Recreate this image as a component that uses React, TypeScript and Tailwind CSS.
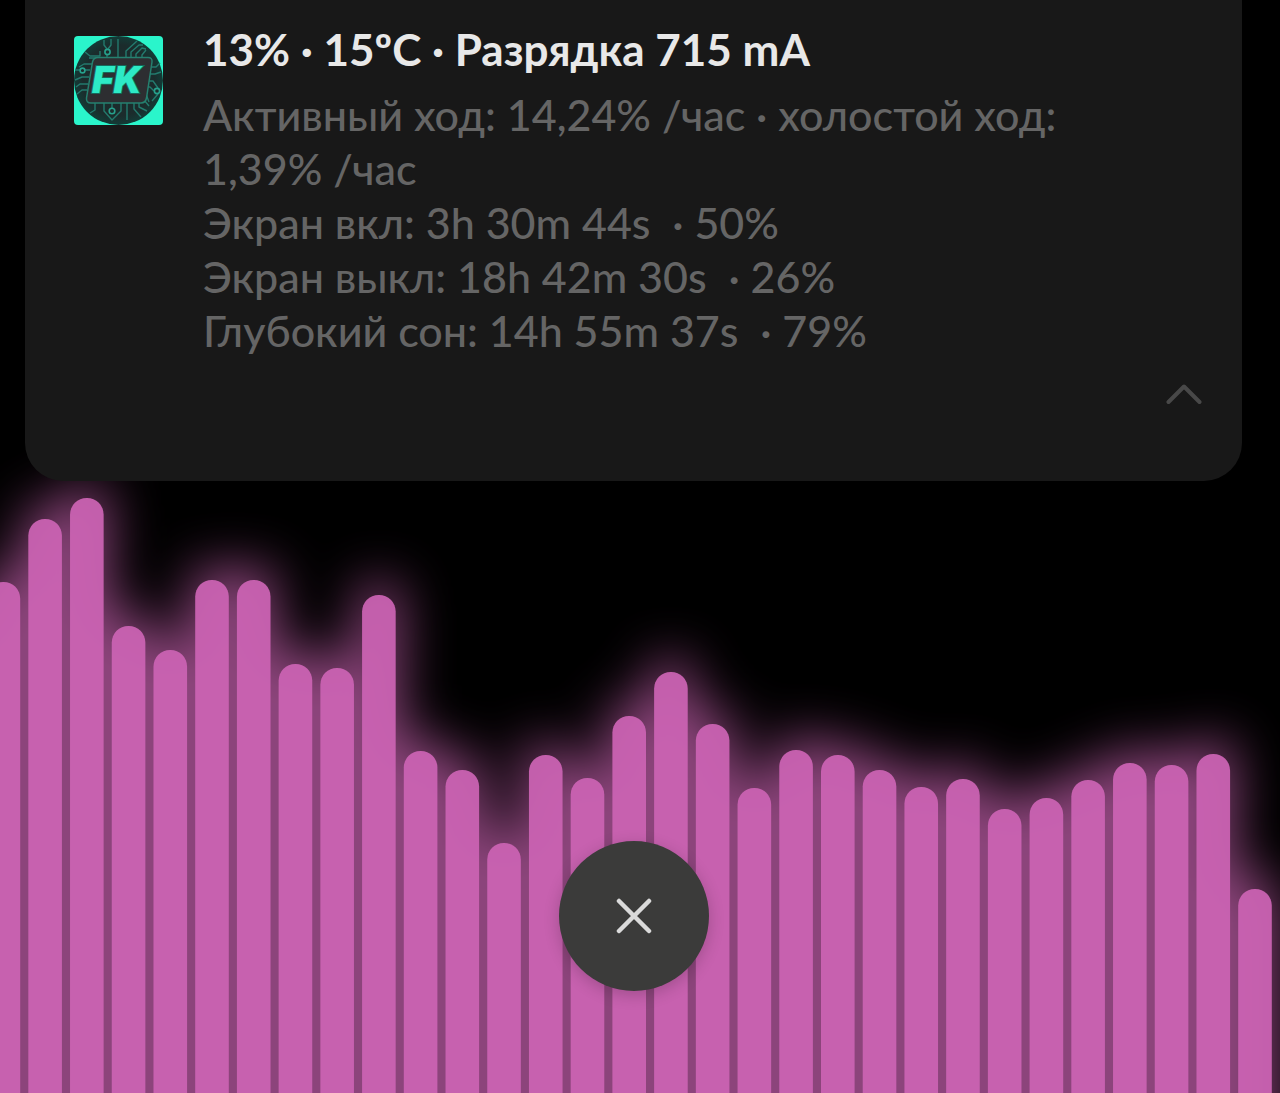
const BAR_TOPS = [
  582, 519, 498, 626, 650, 580, 580, 664, 668, 595, 751, 770, 843, 755, 778, 716,
  672, 724, 788, 750, 755, 770, 787, 779, 809, 798, 780, 763, 765, 754, 889,
];

const PITCH = 41.72;
const BAR_WIDTH = 33.6;
const CHART_TOP = 453;
const CHART_HEIGHT = 640;

function Bars({ spread = 0, lift = 0 }: { spread?: number; lift?: number }) {
  return (
    <>
      {BAR_TOPS.map((top, i) => (
        <rect
          key={i}
          x={-13.4 + i * PITCH - spread}
          y={top - CHART_TOP - lift}
          width={BAR_WIDTH + spread * 2}
          height={CHART_HEIGHT + 160 - (top - CHART_TOP)}
          rx={16.5}
        />
      ))}
    </>
  );
}

function Visualizer() {
  return (
    <svg
      viewBox="0 0 1280 640"
      className="col-start-1 row-start-1 block h-auto w-full self-end overflow-visible"
      aria-hidden="true"
    >
      <defs>
        <filter id="glow" filterUnits="userSpaceOnUse" x="-160" y="-160" width="1600" height="1080" colorInterpolationFilters="sRGB">
          <feGaussianBlur stdDeviation="26" />
        </filter>
      </defs>
      <g fill="#c862b0" opacity="0.7" filter="url(#glow)">
        <rect x="-60" y="170" width="50" height="700" />
        <Bars spread={5} lift={14} />
      </g>
      <g fill="#cb63b3" opacity="0.94">
        <Bars />
      </g>
    </svg>
  );
}

function AppIcon() {
  return (
    <svg viewBox="0 0 89 89" className="mt-9 size-[89px] shrink-0 rounded-[4px]" role="img" aria-label="FK">
      <defs>
        <radialGradient id="disc">
          <stop offset="0" stopColor="#1d2a2b" />
          <stop offset="0.8" stopColor="#1b2c2c" />
          <stop offset="1" stopColor="#123c37" />
        </radialGradient>
      </defs>
      <rect width="89" height="89" fill="#2af5cb" />
      <circle cx="44.5" cy="44.5" r="44.5" fill="url(#disc)" />
      <g fill="none" stroke="#237a6d" strokeWidth="1.4" strokeLinejoin="round">
        <path d="M11 16l5 4h10V15M30 4v5l3 4M37 3v6l-3 4M33 19v3M44 3v18M52 21v-6l11-10M57 21v-5l8-7h4M62 22v-4l6-6 4 1M68 22v-3l4-5M23 22h-8" />
        <path d="M18 28h-8l-5 3M16 34h-5M6 34H1M15 41H8l-7 3M14 48H6l-4 3M13 54H8l-5 4" />
        <path d="M76 31h6l4-4M75 38h6l6-2M74 45h5l5 7M73 51h3l4 4M84 58l-6 7M72 58l3 8M70 64l5 6" />
        <path d="M21 67v7l-5 3M30 67v8l8 9 9-9V67M38 72v-5M53 67v17M60 67v6l7 8M65 67v4l8 4" />
      </g>
      <g fill="#1b2c2c" stroke="#26a18c" strokeWidth="1.6">
        <circle cx="33.5" cy="16" r="2.6" />
        <circle cx="8.5" cy="34.5" r="2.4" />
        <circle cx="83" cy="55" r="2.6" />
        <circle cx="38" cy="75" r="2.8" />
      </g>
      <path
        d="M24 21.500H74q4.500 0 4 4.500L72.500 62q-1 5-5.500 5H17q-5 0-4.500-5L18.500 26q1-4.500 5.500-4.500Z"
        fill="#2d2e31"
        stroke="#25806f"
        strokeWidth="1.5"
      />
      <text
        x="18"
        y="57"
        fontFamily="Inter, Liberation Sans, sans-serif"
        fontSize="37"
        fontWeight="900"
        fontStyle="italic"
        fill="#2deac6"
        stroke="#16695c"
        strokeWidth="2"
        paintOrder="stroke"
      >
        FK
      </text>
    </svg>
  );
}

const DETAILS = [
  "Активный ход: 14,24% /час · холостой ход: 1,39% /час",
  "Экран вкл: 3h 30m 44s  · 50%",
  "Экран выкл: 18h 42m 30s  · 26%",
  "Глубокий сон: 14h 55m 37s  · 79%",
];

export default function App() {
  return (
    <main className="grid min-h-screen overflow-hidden bg-black font-['Lato','Noto_Sans',sans-serif]">
      <Visualizer />
      <div className="relative col-start-1 row-start-1 flex flex-col items-center pr-[38px] pl-[25px]">
        <article className="flex w-full flex-col rounded-b-[38px] bg-[#181818] pb-[67px]">
          <div className="flex gap-10 pr-[120px] pl-[49px]">
            <AppIcon />
            <div className="min-w-0 pt-5">
              <h1 className="text-[44px] leading-[58px] font-bold text-[#e8e8e8]">
                13% · 15ºC · Разрядка 715 mA
              </h1>
              <div className="mt-2.5 text-[43px] leading-[54px] font-medium text-[#656565]">
                {DETAILS.map((line) => (
                  <p key={line} className="whitespace-pre-wrap">
                    {line}
                  </p>
                ))}
              </div>
            </div>
          </div>
          <button
            type="button"
            aria-label="Свернуть"
            className="mt-4 mr-10 flex h-10 w-10 items-center justify-end self-end"
          >
            <svg viewBox="0 0 36 22" className="h-[22px] w-9" fill="none" stroke="#484848" strokeWidth="4" strokeLinecap="round" strokeLinejoin="round">
              <path d="M2.500 19 18 3.500 33.500 19" />
            </svg>
          </button>
        </article>
        <button
          type="button"
          aria-label="Закрыть"
          className="mt-auto mb-[102px] flex size-[150px] items-center justify-center rounded-full bg-[#3b3b3a] shadow-[0_4px_16px_rgba(0,0,0,0.2)]"
        >
          <svg viewBox="0 0 36 36" className="size-9" fill="none" stroke="#dadada" strokeWidth="4.500" strokeLinecap="round">
            <path d="M3 3 33 33M33 3 3 33" />
          </svg>
        </button>
      </div>
    </main>
  );
}
